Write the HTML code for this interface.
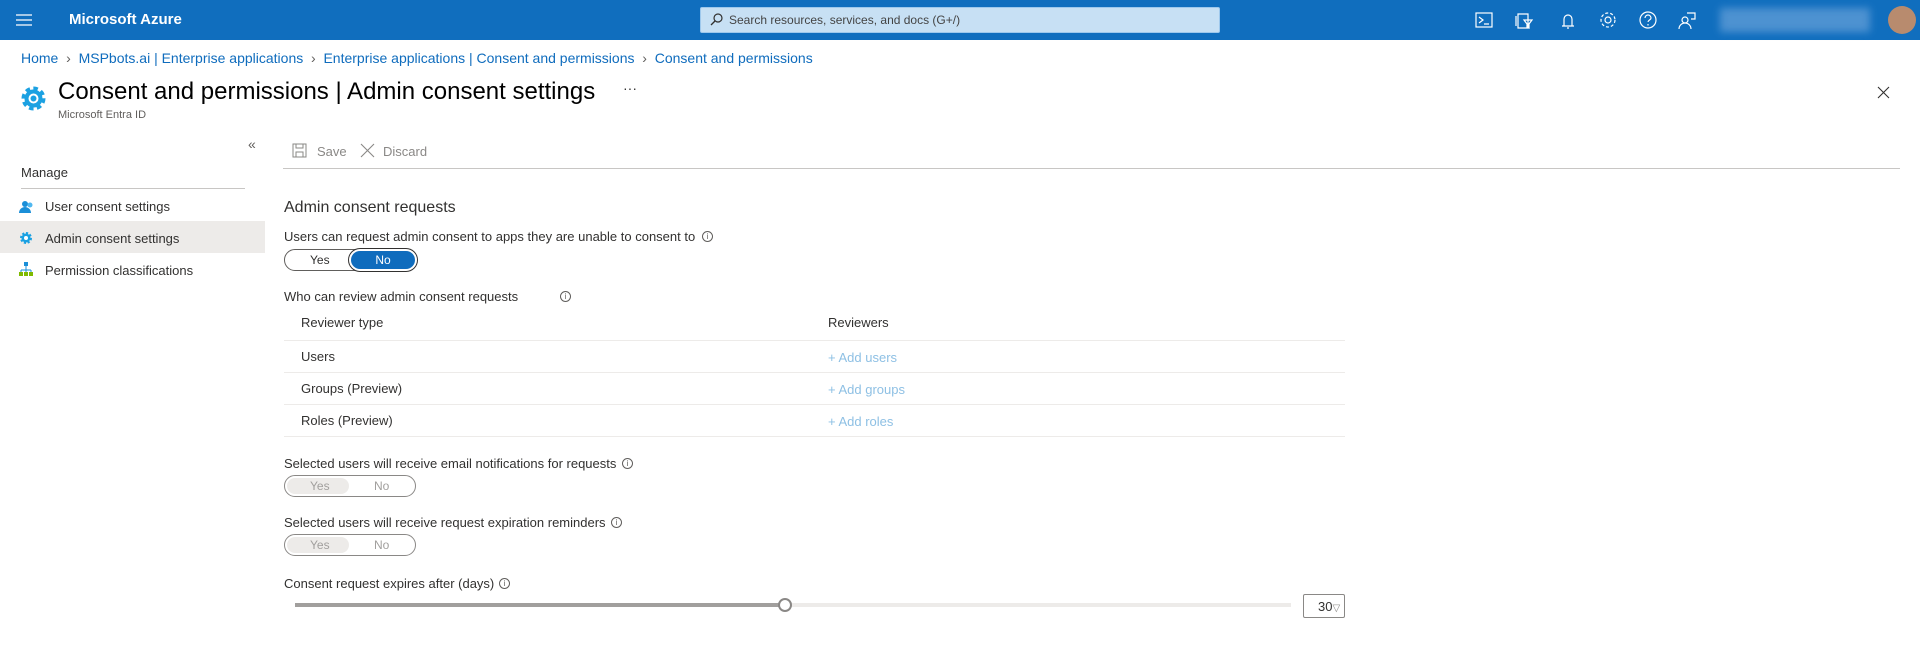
<!DOCTYPE html>
<html><head><meta charset="utf-8"><style>
*{box-sizing:border-box;margin:0;padding:0}
body{width:1920px;height:645px;overflow:hidden;background:#fff;font-family:"Liberation Sans",sans-serif;color:#323130;font-size:13px;position:relative}
.a{position:absolute;white-space:nowrap}
.top{position:absolute;left:0;top:0;width:1920px;height:40px;background:#106ebe}
.link{color:#0f6cbd}
.tog{position:absolute;width:132px;height:22px;border:1px solid #605e5c;border-radius:11px}
.tog span{position:absolute;top:3px;font-size:12px}
.line{position:absolute;height:1px;background:#e1dfdd}
.info{position:absolute;width:11px;height:11px;border:1px solid #605e5c;border-radius:50%;font-size:8px;line-height:9px;text-align:center;color:#605e5c}
</style></head><body>
<div class="top">
 <svg class="a" style="left:16px;top:13px" width="16" height="14"><path d="M0 2h16M0 7h16M0 12h16" stroke="#fff" stroke-width="1.3"/></svg>
 <div class="a" style="left:69px;top:11px;color:#fff;font-weight:bold;font-size:15px">Microsoft Azure</div>
 <div class="a" style="left:700px;top:7px;width:520px;height:26px;background:#c7e0f4;border:1px solid #9ec8ec;border-radius:2px"></div>
 <svg class="a" style="left:710px;top:13px" width="13" height="13"><circle cx="8" cy="5" r="4" fill="none" stroke="#323130" stroke-width="1.2"/><path d="M5 8L1 12" stroke="#323130" stroke-width="1.3"/></svg>
 <div class="a" style="left:729px;top:13px;font-size:12px;color:#444">Search resources, services, and docs (G+/)</div>
 <svg class="a" style="left:1475px;top:11px" width="230" height="20" fill="none" stroke="#fff" stroke-width="1.2">
  <rect x="1" y="2" width="16" height="14"/><path d="M4 6l4 3-4 3M9 13h5"/>
  <path d="M43 3h10v14h-10zM41 5v10M49 9h8l-3 4v4l-2-1v-3z"/>
  <path d="M87 15h12M89 15V8a4 4 0 018 0v7M92 17h2"/>
  <circle cx="133" cy="9" r="3"/><circle cx="133" cy="9" r="7" stroke-dasharray="3 2"/>
  <circle cx="173" cy="9" r="8"/><path d="M170 7a3 3 0 116 0c0 2-3 2-3 4M173 13v1.5"/>
  <circle cx="210" cy="9" r="3"/><path d="M204 18a6 6 0 0112 0M212 2h8v6h-4"/>
 </svg>
 <div class="a" style="left:1720px;top:8px;width:150px;height:24px;background:#5d9bd6;filter:blur(4px);opacity:.8"></div>
 <div class="a" style="left:1888px;top:6px;width:28px;height:28px;border-radius:50%;background:#b88b6e"></div>
</div>
<div class="a" style="left:21px;top:50px;font-size:14px"><span class="link">Home</span> <span style="color:#605e5c">&nbsp;›&nbsp;</span> <span class="link">MSPbots.ai | Enterprise applications</span> <span style="color:#605e5c">&nbsp;›&nbsp;</span> <span class="link">Enterprise applications | Consent and permissions</span> <span style="color:#605e5c">&nbsp;›&nbsp;</span> <span class="link">Consent and permissions</span></div>
<svg class="a" style="left:20px;top:85px" width="27" height="27"><circle cx="13.5" cy="13.5" r="9" fill="#1ba1e2" stroke="#1ba1e2" stroke-width="6" stroke-dasharray="4 3"/><circle cx="13.5" cy="13.5" r="4" fill="none" stroke="#fff" stroke-width="2"/></svg>
<div class="a" style="left:58px;top:78px;font-size:24px;color:#000">Consent and permissions | Admin consent settings</div>
<div class="a" style="left:623px;top:80px;font-size:14px">···</div>
<div class="a" style="left:58px;top:109px;font-size:11px;color:#605e5c">Microsoft Entra ID</div>
<svg class="a" style="left:1877px;top:86px" width="13" height="13"><path d="M1 1l11 11M12 1L1 12" stroke="#323130" stroke-width="1.1"/></svg>
<div class="a" style="left:248px;top:136px;font-size:14px;color:#605e5c">«</div>
<div class="a" style="left:21px;top:165px;font-size:13px">Manage</div>
<div class="line" style="left:21px;top:188px;width:224px;background:#c8c6c4"></div>
<svg class="a" style="left:19px;top:199px" width="14" height="14"><circle cx="6" cy="5" r="3" fill="#1b8fd8"/><path d="M0 14a6 6 0 0112 0z" fill="#1b8fd8"/><circle cx="11" cy="6" r="2.5" fill="#50b8f0"/></svg>
<div class="a" style="left:45px;top:199px">User consent settings</div>
<div class="a" style="left:0;top:221px;width:265px;height:32px;background:#edebe9"></div>
<svg class="a" style="left:19px;top:231px" width="14" height="14"><circle cx="7" cy="7" r="4.5" fill="#1ba1e2" stroke="#1ba1e2" stroke-width="3" stroke-dasharray="2 1.5"/><circle cx="7" cy="7" r="2" fill="#fff"/></svg>
<div class="a" style="left:45px;top:231px">Admin consent settings</div>
<svg class="a" style="left:19px;top:262px" width="14" height="15"><rect x="5" y="0" width="4" height="4" fill="#1b8fd8"/><path d="M7 4v4M2 8h10M2 8v2M7 8v2M12 8v2" stroke="#1b8fd8"/><rect x="0" y="10" width="4" height="4" fill="#7fba00"/><rect x="5" y="10" width="4" height="4" fill="#7fba00"/><rect x="10" y="10" width="4" height="4" fill="#7fba00"/></svg>
<div class="a" style="left:45px;top:263px">Permission classifications</div>
<svg class="a" style="left:292px;top:143px" width="15" height="15" fill="none" stroke="#8a8886"><rect x="1" y="1" width="13" height="13"/><rect x="4" y="1" width="7" height="4"/><rect x="4" y="9" width="7" height="5"/></svg>
<div class="a" style="left:317px;top:144px;color:#8a8886">Save</div>
<svg class="a" style="left:360px;top:143px" width="15" height="15"><path d="M1 1l13 13M14 1L1 14" stroke="#8a8886" stroke-width="1.1"/></svg>
<div class="a" style="left:383px;top:144px;color:#8a8886">Discard</div>
<div class="line" style="left:283px;top:168px;width:1617px;background:#c8c6c4"></div>
<div class="a" style="left:284px;top:199px;font-size:16px">Admin consent requests</div>
<div class="a" style="left:284px;top:229px">Users can request admin consent to apps they are unable to consent to</div>
<div class="info" style="left:702px;top:231px">i</div>
<div class="tog" style="left:284px;top:249px"><span style="left:25px">Yes</span></div>
<div class="a" style="left:351px;top:251px;width:64px;height:18px;background:#0f6cbd;border-radius:9px;box-shadow:0 0 0 2px #fff,0 0 0 3px #323130;color:#fff;font-size:12px;text-align:center;line-height:18px">No</div>
<div class="a" style="left:284px;top:289px">Who can review admin consent requests</div>
<div class="info" style="left:560px;top:291px">i</div>
<div class="a" style="left:301px;top:315px">Reviewer type</div>
<div class="a" style="left:828px;top:315px">Reviewers</div>
<div class="line" style="left:284px;top:340px;width:1061px;background:#edebe9"></div>
<div class="a" style="left:301px;top:349px">Users</div>
<div class="a" style="left:828px;top:350px;color:#8ec0e4">+ Add users</div>
<div class="line" style="left:284px;top:372px;width:1061px;background:#edebe9"></div>
<div class="a" style="left:301px;top:381px">Groups (Preview)</div>
<div class="a" style="left:828px;top:382px;color:#8ec0e4">+ Add groups</div>
<div class="line" style="left:284px;top:404px;width:1061px;background:#edebe9"></div>
<div class="a" style="left:301px;top:413px">Roles (Preview)</div>
<div class="a" style="left:828px;top:414px;color:#8ec0e4">+ Add roles</div>
<div class="line" style="left:284px;top:436px;width:1061px;background:#edebe9"></div>
<div class="a" style="left:284px;top:456px">Selected users will receive email notifications for requests</div>
<div class="info" style="left:622px;top:458px">i</div>
<div class="tog" style="left:284px;top:475px;border-color:#8a8886"><div class="a" style="left:2px;top:2px;width:62px;height:16px;background:#edebe9;border-radius:8px"></div><span style="left:25px;color:#a19f9d">Yes</span><span style="left:89px;color:#a19f9d">No</span></div>
<div class="a" style="left:284px;top:515px">Selected users will receive request expiration reminders</div>
<div class="info" style="left:611px;top:517px">i</div>
<div class="tog" style="left:284px;top:534px;border-color:#8a8886"><div class="a" style="left:2px;top:2px;width:62px;height:16px;background:#edebe9;border-radius:8px"></div><span style="left:25px;color:#a19f9d">Yes</span><span style="left:89px;color:#a19f9d">No</span></div>
<div class="a" style="left:284px;top:576px">Consent request expires after (days)</div>
<div class="info" style="left:499px;top:578px">i</div>
<div class="a" style="left:295px;top:603px;width:996px;height:4px;background:#edebe9"></div>
<div class="a" style="left:295px;top:603px;width:490px;height:4px;background:#a19f9d"></div>
<div class="a" style="left:778px;top:598px;width:14px;height:14px;border-radius:50%;background:#fff;border:2px solid #8a8886"></div>
<div class="a" style="left:1303px;top:594px;width:42px;height:24px;border:1px solid #8a8886;border-radius:2px;font-size:13px;padding:4px 0 0 14px">30<span style="color:#8a8886;font-size:10px">▽</span></div>
</body></html>
